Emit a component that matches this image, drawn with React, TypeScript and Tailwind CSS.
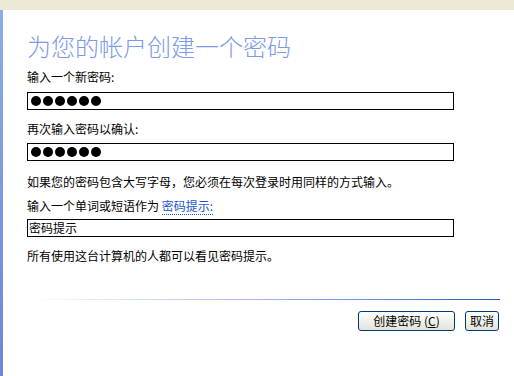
import React from 'react';

const font = { fontFamily: '"Noto Sans CJK SC", "Noto Sans", sans-serif' };

const Dots = () => (
    <div className="flex items-center gap-[2px] pl-[3px] h-full">
        {[0, 1, 2, 3, 4, 5].map((i) => (
            <span key={i} className="block w-[10px] h-[10px] rounded-full bg-black" />
        ))}
    </div>
);

const App = () => {
    return (
        <div className="w-[514px] h-[376px] bg-white flex flex-col overflow-hidden text-black" style={font}>
            <div className="h-[10px] bg-[#ECE9D8]" />
            <div className="flex flex-1">
                <div className="w-[3px] bg-gradient-to-b from-[#8EABEA] to-[#6E83DA]" />
                <div className="flex-1 pl-[24px] flex flex-col">
                    <h1 className="mt-[24px] text-[24px] leading-[24px] text-[#7D99E9] font-light">
                        为您的帐户创建一个密码
                    </h1>
                    <p className="mt-[12px] text-[12px] leading-[14px]">输入一个新密码:</p>
                    <div className="mt-[8px] w-[427px] h-[18px] border-[1.5px] border-black">
                        <Dots />
                    </div>
                    <p className="mt-[12px] text-[12px] leading-[14px]">再次输入密码以确认:</p>
                    <div className="mt-[7px] w-[427px] h-[18px] border-[1.5px] border-black">
                        <Dots />
                    </div>
                    <p className="mt-[14px] text-[12px] leading-[14px]">
                        如果您的密码包含大写字母，您必须在每次登录时用同样的方式输入。
                    </p>
                    <p className="mt-[10px] text-[12px] leading-[14px]">
                        输入一个单词或短语作为{' '}
                        <span className="text-[#1D55C9] border-b border-dotted border-[#1D55C9]">密码提示:</span>
                    </p>
                    <div className="mt-[6px] w-[427px] h-[18px] border-[1.5px] border-black text-[12px] leading-[15px] pl-[1px]">
                        密码提示
                    </div>
                    <p className="mt-[12px] text-[12px] leading-[14px]">所有使用这台计算机的人都可以看见密码提示。</p>
                    <div className="mt-[36px] ml-[3px] w-[470px] h-[1px] bg-gradient-to-r from-white via-[#9fb6ee] to-[#2659C6]" />
                    <div className="mt-[11px] flex justify-end pr-[15px] gap-[10px]">
                        <button
                            type="button"
                            className="w-[97px] h-[20px] rounded-[3px] border border-[#003C74] bg-gradient-to-b from-white to-[#E3E3DB] text-[12px] leading-[18px]"
                        >
                            创建密码 (<span className="underline">C</span>)
                        </button>
                        <button
                            type="button"
                            className="w-[34px] h-[20px] rounded-[3px] border border-[#003C74] bg-gradient-to-b from-white to-[#E3E3DB] text-[12px] leading-[18px]"
                        >
                            取消
                        </button>
                    </div>
                </div>
            </div>
        </div>
    );
};

export default App;
